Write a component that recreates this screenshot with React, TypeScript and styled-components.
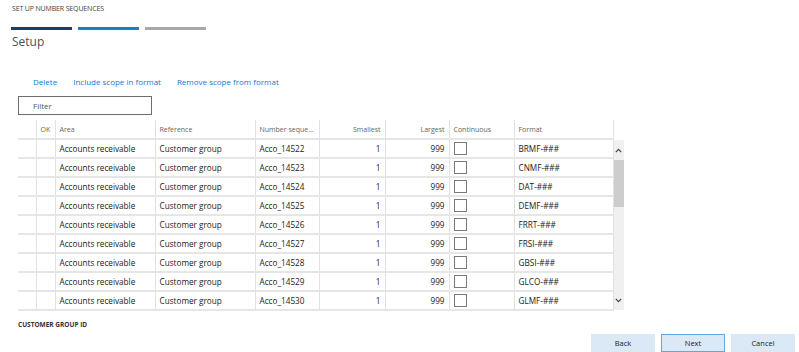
import styled, { createGlobalStyle } from "styled-components";

const GlobalStyle = createGlobalStyle`
  html, body {
    margin: 0;
    padding: 0;
    background: #ffffff;
  }
  body {
    font-family: "Open Sans", "Noto Sans", sans-serif;
    color: #222;
  }
`;

const Page = styled.div`
  width: 799px;
  height: 352px;
  box-sizing: border-box;
  padding: 4px 0 0 0;
  display: flex;
  flex-direction: column;
  overflow: hidden;
`;

const WizardTitle = styled.div`
  margin-left: 12px;
  font-size: 7px;
  line-height: 10px;
  color: #444;
  letter-spacing: -0.15px;
`;

const Stepper = styled.div`
  display: flex;
  gap: 6px;
  margin: 13px 0 0 11px;
`;

const Step = styled.div<{ $color: string }>`
  width: 61px;
  height: 3px;
  background: ${(p) => p.$color};
`;

const PageHeading = styled.h2`
  margin: 4px 0 0 12px;
  font-size: 12px;
  line-height: 16px;
  font-weight: 400;
  color: #505050;
`;

const ActionBar = styled.div`
  display: flex;
  gap: 16px;
  margin: 26px 0 0 33px;
`;

const ActionLink = styled.a`
  font-size: 8px;
  line-height: 12px;
  color: #1479d0;
  cursor: pointer;
`;

const FilterInput = styled.input`
  margin: 8px 0 0 18px;
  width: 134px;
  height: 19px;
  box-sizing: border-box;
  border: 1px solid #6e6e6e;
  padding: 0 14px;
  font-family: inherit;
  font-size: 8px;
  color: #333;
  outline: none;
  &::placeholder {
    color: #555;
  }
`;

const GridArea = styled.div`
  display: flex;
  margin: 5px 0 0 18px;
`;

const Table = styled.table`
  border-collapse: collapse;
  table-layout: fixed;
  width: 595px;
`;

const HeadCell = styled.th<{ $align?: string }>`
  height: 19px;
  box-sizing: border-box;
  padding: 0 4px;
  font-size: 7px;
  font-weight: 400;
  color: #666;
  text-align: ${(p) => p.$align || "left"};
  border-right: 1px solid #e1e1e1;
  border-bottom: 2px solid #e6e6e6;
  white-space: nowrap;
  overflow: hidden;
  text-overflow: ellipsis;
`;

const Cell = styled.td<{ $align?: string }>`
  height: 19px;
  box-sizing: border-box;
  padding: 0 4px;
  font-size: 8.2px;
  color: #222;
  text-align: ${(p) => p.$align || "left"};
  border-right: 1px solid #e1e1e1;
  border-bottom: 2px solid #e6e6e6;
  white-space: nowrap;
  overflow: hidden;
`;

const Check = styled.span`
  display: block;
  width: 11px;
  height: 11px;
  border: 1px solid #7a7a7a;
  background: #fff;
`;

const ScrollBar = styled.div`
  margin-top: 20px;
  width: 10px;
  height: 170px;
  background: #f0f0f0;
  display: flex;
  flex-direction: column;
  align-items: center;
`;

const ScrollArrow = styled.div`
  height: 20px;
  display: flex;
  align-items: center;
  justify-content: center;
`;

const ScrollTrack = styled.div`
  flex: 1;
  width: 100%;
`;

const ScrollThumb = styled.div`
  width: 100%;
  height: 47px;
  background: #cdcdcd;
`;

const Footer = styled.div`
  display: flex;
  flex-direction: column;
  margin-top: 9px;
`;

const FieldLabel = styled.div`
  margin-left: 18px;
  font-size: 6.5px;
  font-weight: 700;
  color: #333;
`;

const ButtonRow = styled.div`
  display: flex;
  justify-content: flex-end;
  gap: 6px;
  margin: 5px 4px 0 0;
`;

const WizardButton = styled.button<{ $primary?: boolean }>`
  width: 64px;
  height: 18px;
  box-sizing: border-box;
  border: 1px solid ${(p) => (p.$primary ? "#6aa6dc" : "#dbe9f6")};
  background: #dbe9f6;
  font-family: inherit;
  font-size: 7.5px;
  color: #222;
  padding: 0;
`;

const Chevron = ({ up }: { up?: boolean }) => (
  <svg width="7" height="5" viewBox="0 0 7 5">
    <path
      d={up ? "M0.8 4.2 L3.5 1.4 L6.2 4.2" : "M0.8 0.8 L3.5 3.6 L6.2 0.8"}
      fill="none"
      stroke="#444"
      strokeWidth="1.2"
    />
  </svg>
);

const formats = [
  "BRMF-###",
  "CNMF-###",
  "DAT-###",
  "DEMF-###",
  "FRRT-###",
  "FRSI-###",
  "GBSI-###",
  "GLCO-###",
  "GLMF-###",
];

const rows = formats.map((format, i) => ({
  area: "Accounts receivable",
  reference: "Customer group",
  sequence: `Acco_${14522 + i}`,
  smallest: 1,
  largest: 999,
  format,
}));

const widths = [18, 19, 100, 100, 64, 66, 64, 65, 99];

export default function App() {
  return (
    <Page>
      <GlobalStyle />
      <WizardTitle>SET UP NUMBER SEQUENCES</WizardTitle>
      <Stepper>
        <Step $color="#17406b" />
        <Step $color="#1a7ad4" />
        <Step $color="#a8a8a8" />
      </Stepper>
      <PageHeading>Setup</PageHeading>
      <ActionBar>
        <ActionLink>Delete</ActionLink>
        <ActionLink>Include scope in format</ActionLink>
        <ActionLink>Remove scope from format</ActionLink>
      </ActionBar>
      <FilterInput placeholder="Filter" />
      <GridArea>
        <Table>
          <colgroup>
            {widths.map((w, i) => (
              <col key={i} style={{ width: w }} />
            ))}
          </colgroup>
          <thead>
            <tr>
              <HeadCell />
              <HeadCell>OK</HeadCell>
              <HeadCell>Area</HeadCell>
              <HeadCell>Reference</HeadCell>
              <HeadCell>Number sequen...</HeadCell>
              <HeadCell $align="right">Smallest</HeadCell>
              <HeadCell $align="right">Largest</HeadCell>
              <HeadCell>Continuous</HeadCell>
              <HeadCell>Format</HeadCell>
            </tr>
          </thead>
          <tbody>
            {rows.map((r) => (
              <tr key={r.sequence}>
                <Cell />
                <Cell />
                <Cell>{r.area}</Cell>
                <Cell>{r.reference}</Cell>
                <Cell>{r.sequence}</Cell>
                <Cell $align="right">{r.smallest}</Cell>
                <Cell $align="right">{r.largest}</Cell>
                <Cell>
                  <Check />
                </Cell>
                <Cell>{r.format}</Cell>
              </tr>
            ))}
          </tbody>
        </Table>
        <ScrollBar>
          <ScrollArrow>
            <Chevron up />
          </ScrollArrow>
          <ScrollThumb />
          <ScrollTrack />
          <ScrollArrow>
            <Chevron />
          </ScrollArrow>
        </ScrollBar>
      </GridArea>
      <Footer>
        <FieldLabel>CUSTOMER GROUP ID</FieldLabel>
        <ButtonRow>
          <WizardButton>Back</WizardButton>
          <WizardButton $primary>Next</WizardButton>
          <WizardButton>Cancel</WizardButton>
        </ButtonRow>
      </Footer>
    </Page>
  );
}
